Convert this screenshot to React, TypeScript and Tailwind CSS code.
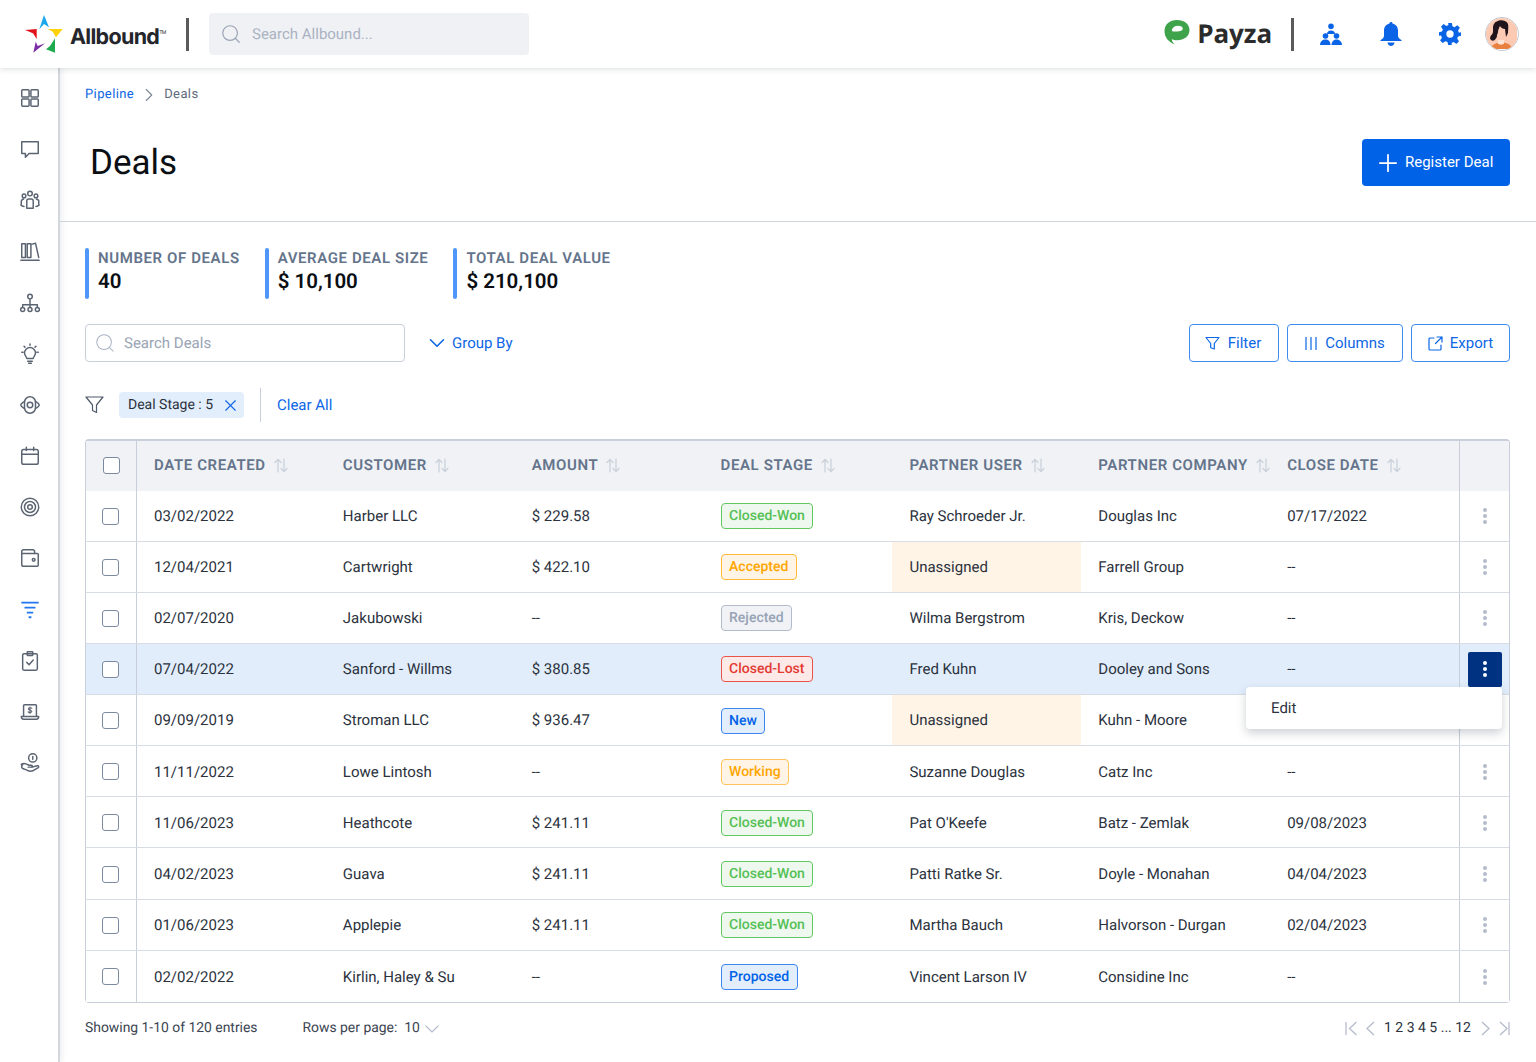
import type { ReactNode } from 'react'
import { ChevronDown, ChevronRight, Plus, Search, X } from 'lucide-react'

type Stage = 'won' | 'accepted' | 'rejected' | 'lost' | 'new' | 'working' | 'proposed'

interface Deal {
  created: string
  customer: string
  amount: string
  stage: Stage
  user: string
  company: string
  close: string
}

const deals: Deal[] = [
  { created: '03/02/2022', customer: 'Harber LLC', amount: '$ 229.58', stage: 'won', user: 'Ray Schroeder Jr.', company: 'Douglas Inc', close: '07/17/2022' },
  { created: '12/04/2021', customer: 'Cartwright', amount: '$ 422.10', stage: 'accepted', user: 'Unassigned', company: 'Farrell Group', close: '--' },
  { created: '02/07/2020', customer: 'Jakubowski', amount: '--', stage: 'rejected', user: 'Wilma Bergstrom', company: 'Kris, Deckow', close: '--' },
  { created: '07/04/2022', customer: 'Sanford - Willms', amount: '$ 380.85', stage: 'lost', user: 'Fred Kuhn', company: 'Dooley and Sons', close: '--' },
  { created: '09/09/2019', customer: 'Stroman LLC', amount: '$ 936.47', stage: 'new', user: 'Unassigned', company: 'Kuhn - Moore', close: '' },
  { created: '11/11/2022', customer: 'Lowe Lintosh', amount: '--', stage: 'working', user: 'Suzanne Douglas', company: 'Catz Inc', close: '--' },
  { created: '11/06/2023', customer: 'Heathcote', amount: '$ 241.11', stage: 'won', user: "Pat O'Keefe", company: 'Batz - Zemlak', close: '09/08/2023' },
  { created: '04/02/2023', customer: 'Guava', amount: '$ 241.11', stage: 'won', user: 'Patti Ratke Sr.', company: 'Doyle - Monahan', close: '04/04/2023' },
  { created: '01/06/2023', customer: 'Applepie', amount: '$ 241.11', stage: 'won', user: 'Martha Bauch', company: 'Halvorson - Durgan', close: '02/04/2023' },
  { created: '02/02/2022', customer: 'Kirlin, Haley & Su', amount: '--', stage: 'proposed', user: 'Vincent Larson IV', company: 'Considine Inc', close: '--' },
]

const stageLabel: Record<Stage, string> = {
  won: 'Closed-Won',
  accepted: 'Accepted',
  rejected: 'Rejected',
  lost: 'Closed-Lost',
  new: 'New',
  working: 'Working',
  proposed: 'Proposed',
}

const stageClass: Record<Stage, string> = {
  won: 'border-[#62c962] bg-[#eef8ee] text-[#55c055]',
  accepted: 'border-[#ffb938] bg-[#fff4e5] text-[#ffa600]',
  rejected: 'border-[#b3bccb] bg-[#f0f2f5] text-[#97a2b5]',
  lost: 'border-[#e8534a] bg-[#fde9e8] text-[#e23b32]',
  new: 'border-[#3d86ee] bg-[#e3eefc] text-[#0062e6]',
  working: 'border-[#ffc45c] bg-[#fff4e5] text-[#ffa600]',
  proposed: 'border-[#3d86ee] bg-[#e3eefc] text-[#0062e6]',
}

function NavIcon({ children, color = '#5b6472' }: { children: ReactNode; color?: string }) {
  return (
    <svg width="22" height="22" viewBox="0 0 24 24" fill="none" stroke={color} strokeWidth="1.6" strokeLinecap="round" strokeLinejoin="round">
      {children}
    </svg>
  )
}

const navIcons: ReactNode[] = [
  <NavIcon key="grid">
    <rect x="3" y="3" width="8" height="8" rx="1" />
    <rect x="13" y="3" width="8" height="8" rx="1" />
    <rect x="3" y="13" width="8" height="8" rx="1" />
    <rect x="13" y="13" width="8" height="8" rx="1" />
  </NavIcon>,
  <NavIcon key="chat">
    <path d="M3 4h18v13h-10l-4 4v-4h-4z" />
  </NavIcon>,
  <NavIcon key="team">
    <circle cx="12" cy="5" r="2.5" />
    <circle cx="5.5" cy="7.5" r="2" />
    <circle cx="18.5" cy="7.5" r="2" />
    <path d="M8.5 21v-8a2 2 0 0 1 2-2h3a2 2 0 0 1 2 2v8z" />
    <path d="M5 11c-2 .5-3 2-2.500 4 .2 1-.2 2-.5 2.500 1 1 2 1.500 3.500 1.500" />
    <path d="M19 11c2 .5 3 2 2.500 4-.2 1 .2 2 .5 2.500-1 1-2 1.500-3.500 1.500" />
  </NavIcon>,
  <NavIcon key="library">
    <path d="M3 4h4v15h-4zM9 4h4v15h-4zM14.500 4.500l3.500-1 3.500 15.500" />
    <path d="M2 22h20" />
  </NavIcon>,
  <NavIcon key="tree">
    <circle cx="12" cy="5" r="2.500" />
    <circle cx="4" cy="19" r="2.200" />
    <circle cx="12" cy="19" r="2.200" />
    <circle cx="20" cy="19" r="2.200" />
    <path d="M12 7.500v9M4 17v-3h16v3" />
  </NavIcon>,
  <NavIcon key="bulb">
    <path d="M8.500 17c0-2-2.500-3-2.500-6a6 6 0 0 1 12 0c0 3-2.500 4-2.500 6z" />
    <path d="M9.500 20h5M10.500 22h3M12 1v1.500M3 10h1.500M19.500 10H21M5.500 3.500l1 1M18.500 3.500l-1 1" />
  </NavIcon>,
  <NavIcon key="orbit">
    <circle cx="12" cy="12" r="3" />
    <rect x="6" y="3" width="12" height="18" rx="6" />
    <path d="M6 8C3.500 9.500 2 11 2 12s1.500 2.500 4 4M18 8c2.500 1.500 4 3 4 4s-1.500 2.500-4 4" />
  </NavIcon>,
  <NavIcon key="calendar">
    <rect x="3" y="5" width="18" height="16" rx="2" />
    <path d="M3 10h18M8 2.500V6M16 2.500V6" />
  </NavIcon>,
  <NavIcon key="target">
    <circle cx="12" cy="12" r="9.500" />
    <circle cx="12" cy="12" r="6" />
    <circle cx="12" cy="12" r="2.500" />
  </NavIcon>,
  <NavIcon key="wallet">
    <path d="M3 7V5a2 2 0 0 1 2-2h10a2 2 0 0 1 2 2v2" />
    <path d="M3 7h17a1 1 0 0 1 1 1v12a1 1 0 0 1-1 1H5a2 2 0 0 1-2-2z" />
    <circle cx="16" cy="14" r="1.500" />
  </NavIcon>,
  <NavIcon key="funnel" color="#1f78f0">
    <path d="M2.500 5h19M6 10.500h12M8.500 16h7M10.500 21h3" strokeWidth="2" strokeLinecap="butt" />
  </NavIcon>,
  <NavIcon key="clipboard">
    <rect x="4" y="4" width="16" height="18" rx="1.500" />
    <rect x="9" y="2" width="6" height="4" rx="0.500" />
    <path d="M8.500 13.500l2.500 2.500 4.500-5" />
  </NavIcon>,
  <NavIcon key="laptop">
    <path d="M5 16V5a1 1 0 0 1 1-1h12a1 1 0 0 1 1 1v11" />
    <path d="M2.500 17h19c0 2-1 3-2.500 3H5c-1.500 0-2.500-1-2.500-3z" />
    <path d="M14 8c-.5-.8-3.800-1-3.800.8 0 1.700 3.800 .8 3.800 2.500 0 1.600-3.300 1.500-4 .5M12 6.500v7" strokeWidth="1.200" />
  </NavIcon>,
  <NavIcon key="hand">
    <circle cx="15" cy="6.500" r="4.500" />
    <path d="M15 5v3" />
    <path d="M2.500 13.500c1.500-1 3-1.500 5-.5l3.500 1.500h2.500c1.500 0 1.500 2 0 2H10" />
    <path d="M14 16.500l6-1.500c1.500-.3 2 1.200 1 2l-6 3.500c-2 .8-4 .5-6-.5-2-1-4-1.500-5.500-2.500-1-1-1-2.500 .5-4" />
  </NavIcon>,
]

function SortIcon() {
  return (
    <svg width="14" height="15" viewBox="0 0 14 15" fill="none" stroke="#c9d0db" strokeWidth="1.200" strokeLinecap="round" strokeLinejoin="round" className="ml-[8px] shrink-0">
      <path d="M4 14V1.500M1 4.500l3-3 3 3" />
      <path d="M10 1v12.500M7 10.500l3 3 3-3" />
    </svg>
  )
}

function Checkbox() {
  return <span className="block w-[17px] h-[17px] rounded-[3px] border-[1.5px] border-[#7c8aa0] bg-white" />
}

function Kebab({ color }: { color: string }) {
  return (
    <svg width="4" height="16" viewBox="0 0 4 16" fill={color}>
      <circle cx="2" cy="2" r="2" />
      <circle cx="2" cy="8" r="2" />
      <circle cx="2" cy="14" r="2" />
    </svg>
  )
}

function Stat({ label, value }: { label: string; value: string }) {
  return (
    <div className="flex h-[51px]">
      <div className="w-[4px] h-full rounded-full bg-[#4f96fb] mr-[9px]" />
      <div>
        <div className="text-[15px] leading-[21px] font-semibold tracking-[0.6px] text-[#64748b] whitespace-nowrap">{label}</div>
        <div className="text-[20.500px] leading-[26px] font-semibold text-[#0b0f14] whitespace-nowrap">{value}</div>
      </div>
    </div>
  )
}

function OutlineButton({ icon, label, className }: { icon: ReactNode; label: string; className: string }) {
  return (
    <button className={`${className} h-[38px] pt-[1px] flex items-center justify-center rounded-[4px] border-[1.5px] border-[#3f8cf0] bg-white text-[15px] text-[#0d66e5]`}>
      {icon}
      {label}
    </button>
  )
}

const columns = ['DATE CREATED', 'CUSTOMER', 'AMOUNT', 'DEAL STAGE', 'PARTNER USER', 'PARTNER COMPANY', 'CLOSE DATE']

const gridCols = 'grid grid-cols-[51px_repeat(7,minmax(0,1fr))_50px]'

function DealRow({ deal, active, last }: { deal: Deal; active: boolean; last: boolean }) {
  const unassigned = deal.user === 'Unassigned'
  return (
    <div className={`${gridCols} h-[51.150px] text-[15px] text-[#2b323d] ${last ? '' : 'border-b border-[#d8dce3]'} ${active ? 'bg-[#e1edfb]' : 'bg-white'}`}>
      <div className="flex items-center pl-[16px] pt-[1px] border-r border-[#c8cfda]">
        <Checkbox />
      </div>
      <div className="flex items-center pl-[17px] pt-[1px]">{deal.created}</div>
      <div className="flex items-center pl-[17px] pt-[1px]">{deal.customer}</div>
      <div className="flex items-center pl-[17px] pt-[1px]">{deal.amount}</div>
      <div className="flex items-center pl-[17px] pt-[1px]">
        <span className={`h-[26px] px-[7.500px] pt-[1px] flex items-center rounded-[4px] border-[1.5px] text-[14px] font-medium ${stageClass[deal.stage]}`}>
          {stageLabel[deal.stage]}
        </span>
      </div>
      <div className={`flex items-center pl-[17px] pt-[1px] ${unassigned ? 'bg-[#fff4e5]' : ''}`}>{deal.user}</div>
      <div className="flex items-center pl-[17px] pt-[1px]">{deal.company}</div>
      <div className="flex items-center pl-[17px] pt-[1px]">{deal.close}</div>
      <div className="relative flex items-center justify-center pt-[1px] border-l border-[#c8cfda]">
        {active ? (
          <>
            <span className="w-[34px] h-[35px] ml-[1px] flex items-center justify-center rounded-[2px] bg-[#003282]">
              <Kebab color="#ffffff" />
            </span>
            <div className="absolute z-10 top-[43px] right-[7px] w-[256px] h-[42px] flex items-center pl-[25px] rounded-[4px] bg-white text-[#2b323d] shadow-[0_4px_10px_rgba(30,41,59,0.22)]">
              Edit
            </div>
          </>
        ) : (
          <Kebab color="#b4bccb" />
        )}
      </div>
    </div>
  )
}

export default function App() {
  return (
    <div className="w-[1536px] h-[1062px] overflow-hidden flex flex-col bg-white [font-family:Roboto,sans-serif] [text-rendering:geometricPrecision]">
      <header className="relative z-20 h-[68px] shrink-0 flex items-center bg-white shadow-[0_1px_6px_rgba(30,41,59,0.16)]">
        <svg width="40" height="40" viewBox="24 14 40 40" className="ml-[24px]">
          <path d="M44 15l5 12.300-5-3.300-4.700 5.300z" fill="#1aa7ec" />
          <path d="M47.700 29h15l-6.700 8.300-3.300-5.600z" fill="#fdd20a" />
          <path d="M25 30l11.700-1v10l-3.700-5.700z" fill="#e2121b" />
          <path d="M55 38.300v14.400l-9-3.400 4-3.300z" fill="#1faa4f" />
          <path d="M33.300 52.700l2.400-11 2 4.300 7.300-2.700z" fill="#7b2ea6" />
        </svg>
        <div className="ml-[6px] w-[96px] mt-[8px] flex items-start [font-family:Inter,sans-serif] text-[21.500px] font-bold tracking-[-0.7px] text-[#24262b] leading-none">
          Allbound
          <span className="text-[5px] font-normal mt-[4px]">TM</span>
        </div>
        <div className="ml-[20px] w-[3px] h-[33px] bg-[#5a5a5a]" />
        <div className="ml-[20px] w-[320px] h-[42px] flex items-center rounded-[4px] bg-[#f0f1f5] pl-[11px] text-[15px] text-[#aab3c2]">
          <Search size={22} strokeWidth={1.300} color="#9aa5b5" />
          <span className="ml-[10px]">Search Allbound...</span>
        </div>
        <div className="ml-auto flex items-center">
          <svg width="26" height="25" viewBox="0 0 26 26" className="-mt-[4px] ml-[2px]">
            <path d="M13 0C5.500 0 0 4.500 0 11.500 0 18 4 23 11 25.500c-2-1.500-3-3-3.500-5.500C9 20.500 11 21 13 21c7.500 0 13-4 13-10.500S20.500 0 13 0z" fill="#3ea34a" />
            <path d="M7.500 10.500C8.500 7.500 11 6 14 6c3 0 5 1.200 5 3.200S16.500 12 13 12H8.500" fill="#fff" />
          </svg>
          <span className="ml-[7px] -mt-[2px] [font-family:'Open_Sans',sans-serif] text-[26px] leading-none font-bold tracking-[-0.1px] text-[#2b2b2b]">Payza</span>
          <div className="ml-[19px] w-[3px] h-[33px] bg-[#5a5a5a]" />
          <div className="ml-[25px] w-[24px] flex justify-center">
            <svg width="22" height="22" viewBox="0 0 22 22" fill="#0b63e6">
              <circle cx="11" cy="3.200" r="2.800" />
              <path d="M7 11c0-2 1.500-3.500 4-3.500s4 1.500 4 3.500z" />
              <circle cx="5.500" cy="13" r="2.800" />
              <path d="M0 22c0-3.500 2.500-5.500 5.500-5.500S10.500 18.500 10.500 22z" />
              <circle cx="16.500" cy="13" r="2.800" />
              <path d="M11.500 22c0-3.500 2.500-5.500 5-5.500S22 18.500 22 22z" />
            </svg>
          </div>
          <div className="ml-[36px] w-[24px] flex justify-center">
            <svg width="22" height="24" viewBox="0 0 22 24" fill="#0b63e6">
              <path d="M11 0c-.9 0-1.500 .6-1.500 1.400C6 2.200 4 5 4 8.500v5C4 15.500 2.500 17 .5 18v1h21v-1c-2-1-3.500-2.500-3.500-4.500v-5c0-3.500-2-6.300-5.500-7.100C12.500 .6 11.900 0 11 0z" />
              <path d="M7.500 20.500c.3 2 1.700 3.500 3.500 3.500s3.200-1.500 3.500-3.500z" />
            </svg>
          </div>
          <div className="ml-[35px] w-[24px] flex justify-center">
            <svg width="22" height="22" viewBox="0 0 24 24" fill="#0b63e6" fillRule="evenodd">
              <path d="M10 0h4l.7 3.500 2.300 1 3-2 2.800 2.800-2 3 1 2.300L24 10v4l-3.200 .7-1 2.300 2 3-2.800 2.800-3-2-2.300 1L14 24h-4l-.7-3.200-2.300-1-3 2L1.200 19l2-3-1-2.300L0 14v-4l3.200-.7 1-2.300-2-3L5 1.200l3 2 2.300-1zM12 8a4 4 0 1 0 0 8 4 4 0 0 0 0-8z" />
            </svg>
          </div>
          <div className="ml-[23px] mr-[17px] w-[34px] h-[34px] rounded-full border-[1.5px] border-[#c4cad4] overflow-hidden">
            <svg width="31" height="31" viewBox="0 0 31 31">
              <rect width="31" height="31" fill="#fcc9b3" />
              <path d="M5 31c0-4 5-6.500 10.500-6.500S26 27 26 31z" fill="#e8803f" />
              <path d="M12 22v3.500c1 1.500 5 1.500 6 0V22z" fill="#fbe3d6" />
              <path d="M10 4c3-2.500 9-2.500 11.500 1 1.500 2.500 .5 8 .5 10-1 2-1.500 3-2 4l-1-8c-2 0-4-1-5-3-1 2-2 4-2 6 0 1.500-1.500 3-1 4.500-1 2-2.500 5-5 4-2.500-1-2.500-4 0-6 1.500-2 1-4 1-7 0-2 1-4 2.500-5.500z" fill="#20141c" />
            </svg>
          </div>
        </div>
      </header>

      <div className="flex flex-1 min-h-0">
        <aside className="w-[60px] shrink-0 flex flex-col items-center pt-[4.500px] pl-[2px] border-r-2 border-[#d3d7de] shadow-[2px_0_6px_rgba(30,41,59,0.08)]">
          {navIcons.map((icon, i) => (
            <div key={i} className="h-[51.150px] w-full flex items-center justify-center">
              {icon}
            </div>
          ))}
        </aside>

        <main className="flex-1 min-w-0 flex flex-col">
          <div className="h-[153.500px] shrink-0 border-b border-[#cfd3da] pl-[25px] pr-[26px] pt-[19px]">
            <div className="flex items-center h-[16px] text-[13px] tracking-[0.4px]">
              <span className="text-[#0d66e5]">Pipeline</span>
              <ChevronRight size={22} strokeWidth={1.200} color="#7c8696" className="mx-[4px]" />
              <span className="text-[#5f6b7c]">Deals</span>
            </div>
            <div className="flex items-center justify-between mt-[36px]">
              <h1 className="text-[35px] leading-[47px] text-[#0b0f14] ml-[5px]">Deals</h1>
              <button className="w-[148px] h-[47px] flex items-center pl-[12px] rounded-[4px] bg-[#0062e6] text-[15px] text-white">
                <Plus size={28} strokeWidth={1.500} className="mr-[3px]" />
                Register Deal
              </button>
            </div>
          </div>

          <div className="pl-[25px] pr-[26px] pt-[26px]">
            <div className="flex gap-[25px]">
              <Stat label="NUMBER OF DEALS" value="40" />
              <Stat label="AVERAGE DEAL SIZE" value="$ 10,100" />
              <Stat label="TOTAL DEAL VALUE" value="$ 210,100" />
            </div>

            <div className="flex items-center mt-[25px]">
              <div className="w-[320px] h-[38px] flex items-center rounded-[4px] border-[1.5px] border-[#c9cfd9] pl-[8px] pt-[1px] text-[15px] text-[#99a4b5]">
                <Search size={22} strokeWidth={1.100} color="#a9b3c2" />
                <span className="ml-[8px]">Search Deals</span>
              </div>
              <ChevronDown size={26} strokeWidth={1.500} color="#0d66e5" className="ml-[19px]" />
              <span className="ml-[2px] pt-[1px] text-[15px] text-[#0d66e5]">Group By</span>
              <div className="ml-auto flex gap-[8px]">
                <OutlineButton
                  className="w-[90px] gap-[8px] pr-[2px]"
                  label="Filter"
                  icon={
                    <svg width="15" height="15" viewBox="0 0 15 15" fill="none" stroke="#0d66e5" strokeWidth="1.200" strokeLinejoin="round">
                      <path d="M1 1.500h13L9.300 7.500v5.500l-3.600-1.200V7.500z" />
                    </svg>
                  }
                />
                <OutlineButton
                  className="w-[116px] gap-[8px]"
                  label="Columns"
                  icon={
                    <svg width="12" height="15" viewBox="0 0 12 15" stroke="#0d66e5" strokeWidth="1.200">
                      <path d="M1 1v13M6 1v13M11 1v13" />
                    </svg>
                  }
                />
                <OutlineButton
                  className="w-[99px] gap-[7px]"
                  label="Export"
                  icon={
                    <svg width="15" height="15" viewBox="0 0 15 15" fill="none" stroke="#0d66e5" strokeWidth="1.200" strokeLinecap="round" strokeLinejoin="round">
                      <path d="M6 2H2a1 1 0 0 0-1 1v10a1 1 0 0 0 1 1h10a1 1 0 0 0 1-1V9" />
                      <path d="M9 1h5v5M14 1L7.500 7.500" />
                    </svg>
                  }
                />
              </div>
            </div>

            <div className="flex items-center h-[34px] mt-[26px]">
              <svg width="19" height="19" viewBox="0 0 19 19" fill="none" stroke="#4f5a6a" strokeWidth="1.200" strokeLinejoin="round">
                <path d="M1 2h17l-6.500 8v7.500l-4-2V10z" />
              </svg>
              <div className="ml-[15px] w-[125px] h-[26px] flex items-center rounded-[4px] bg-[#e3eefc] pl-[9px] pt-[1px] text-[14px] text-[#2b323d]">
                Deal Stage : 5
                <X size={19} strokeWidth={1.400} color="#0d66e5" className="ml-[8px]" />
              </div>
              <div className="ml-[16px] w-px h-[34px] bg-[#c8cfda]" />
              <span className="ml-[16px] pt-[1px] text-[15px] text-[#0d66e5]">Clear All</span>
            </div>

            <div className="mt-[17px] rounded-[4px] border border-[#c8cfda] border-t-2">
              <div className={`${gridCols} h-[50px] bg-[#f0f2f5] text-[15px] font-semibold tracking-[0.6px] text-[#64748b]`}>
                <div className="flex items-center pl-[17px] border-r border-[#c8cfda]">
                  <Checkbox />
                </div>
                {columns.map((c) => (
                  <div key={c} className="flex items-center pl-[17px] whitespace-nowrap">
                    {c}
                    <SortIcon />
                  </div>
                ))}
                <div className="border-l border-[#c8cfda]" />
              </div>
              {deals.map((deal, i) => (
                <DealRow key={deal.created + deal.customer} deal={deal} active={i === 3} last={i === deals.length - 1} />
              ))}
            </div>

            <div className="flex items-center h-[18px] mt-[17px] text-[13.900px] text-[#3b4452]">
              <span>Showing 1-10 of 120 entries</span>
              <span className="ml-[45px]">Rows per page:&nbsp; 10</span>
              <ChevronDown size={24} strokeWidth={1.100} color="#b4bccb" className="ml-0" />
              <div className="ml-auto flex items-center">
                <svg width="13" height="15" viewBox="0 0 13 15" fill="none" stroke="#b4bccb" strokeWidth="1.300">
                  <path d="M1 1v13M11.500 1L4.500 7.500l7 6.500" />
                </svg>
                <svg width="10" height="15" viewBox="0 0 10 15" fill="none" stroke="#b4bccb" strokeWidth="1.300" className="ml-[7px]">
                  <path d="M9 1L2 7.500 9 14" />
                </svg>
                <span className="ml-[9px] text-[14px] text-[#2b323d] whitespace-pre">1 2 3 4 5 ... 12</span>
                <svg width="10" height="15" viewBox="0 0 10 15" fill="none" stroke="#b4bccb" strokeWidth="1.300" className="ml-[10px]">
                  <path d="M1 1l7 6.500L1 14" />
                </svg>
                <svg width="11" height="15" viewBox="0 0 11 15" fill="none" stroke="#b4bccb" strokeWidth="1.300" className="ml-[8px]">
                  <path d="M1 1l7 6.500L1 14M10 1v13" />
                </svg>
              </div>
            </div>
          </div>
        </main>
      </div>
    </div>
  )
}
